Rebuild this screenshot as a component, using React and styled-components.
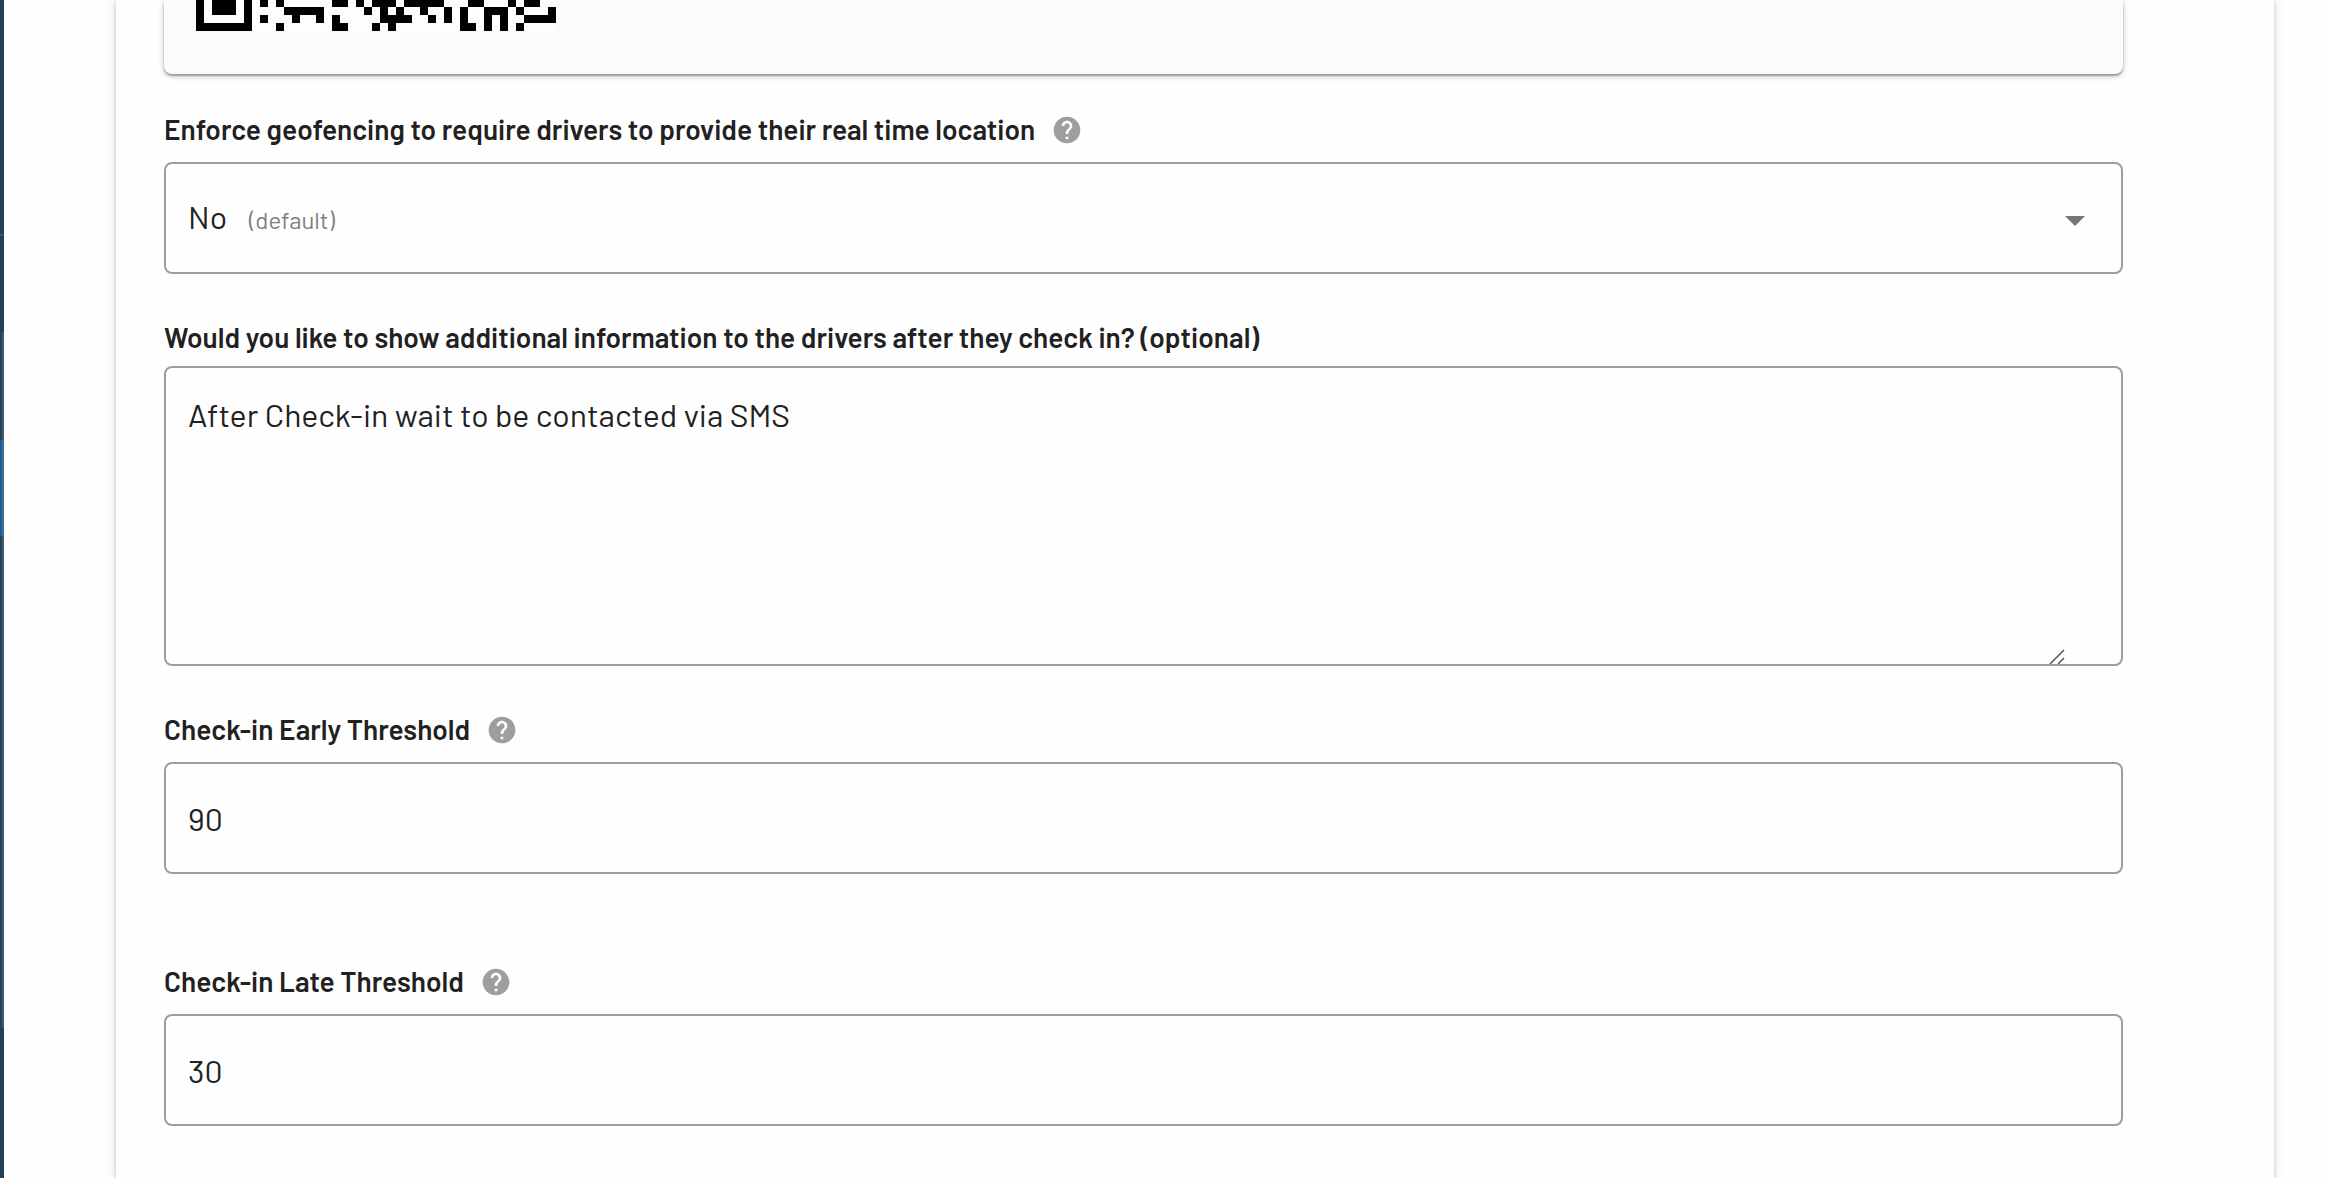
import React, { useState } from "react";
import styled, { createGlobalStyle } from "styled-components";

const GlobalStyle = createGlobalStyle`
  *, *::before, *::after { box-sizing: border-box; }
  body {
    margin: 0;
    background: #fefefe;
    color: #212121;
    font-family: Barlow, Roboto, "Liberation Sans", sans-serif;
  }
`;

const Shell = styled.div`
  display: flex;
  min-height: 100vh;
`;

const Rail = styled.nav`
  display: flex;
  flex: 0 0 4px;
  flex-direction: column;
  background: #1f405a;
`;

const RailDivider = styled.div`
  height: 2px;
  margin-top: 234px;
  background: #3b586e;
`;

const RailScroll = styled.div`
  height: 696px;
  margin-top: 96px;
  padding-top: 108px;
  background: linear-gradient(to right, #264358 2px, #405d72 2px);
`;

const RailActive = styled.div`
  height: 96px;
  background: linear-gradient(to right, #235a8c 2px, #3b6f9c 2px);
`;

const Page = styled.main`
  flex: 1;
  min-width: 0;
  padding: 0 54px 0 112px;
`;

const Card = styled.section`
  min-height: 100vh;
  padding: 0 151px 52px 48px;
  background: #fefefe;
  box-shadow: 0 2px 4px rgba(0, 0, 0, 0.2), 0 0 12px rgba(0, 0, 0, 0.1);
`;

const Form = styled.form`
  display: flex;
  flex-direction: column;
`;

const QrPanel = styled.div`
  height: 74px;
  padding: 0 32px;
  background: #fafbfd;
  border-radius: 0 0 8px 8px;
  box-shadow: 0 2px 2px rgba(0, 0, 0, 0.3), 0 2px 6px rgba(0, 0, 0, 0.2);
`;

const QrImage = styled.svg`
  display: block;
  width: 360px;
  height: 31px;
`;

const Field = styled.div`
  display: flex;
  flex-direction: column;
  margin-top: ${(p) => p.$gap}px;
`;

const LabelRow = styled.div`
  display: flex;
  align-items: center;
  gap: 16px;
  height: 40px;
  margin-bottom: ${(p) => p.$space || 12}px;
`;

const Label = styled.label`
  font-size: 28px;
  line-height: 36px;
  padding-bottom: 2px;
  font-weight: 600;
  white-space: nowrap;
`;

const HelpButton = styled.button`
  display: flex;
  padding: 0;
  border: 0;
  background: none;
  color: #9e9e9e;
  cursor: pointer;
`;

const Outline = styled.div`
  display: flex;
  align-items: center;
  height: ${(p) => p.$height || 112}px;
  padding-left: 22px;
  padding-right: ${(p) => p.$end || 22}px;
  border: 2px solid #9e9e9e;
  border-radius: 8px;
`;

const Select = styled.select`
  flex: 1;
  align-self: stretch;
  appearance: none;
  border: 0;
  background: none;
  outline: none;
  color: inherit;
  font: 400 32px/40px Barlow, Roboto, sans-serif;
  padding: 0;

  &, &::picker(select) { appearance: base-select; }
  &::picker-icon { display: none; }
`;

const SelectTrigger = styled.button`
  display: flex;
  align-items: center;
  height: 108px;
  padding: 0;
  border: 0;
  background: none;
  font: inherit;
  color: inherit;
`;

const OptionContent = styled.span`
  display: flex;
  align-items: baseline;
  gap: 22px;
`;

const Hint = styled.span`
  color: #808080;
  font-size: 24px;
`;

const TextInput = styled.input`
  flex: 1;
  min-width: 0;
  padding: 0;
  border: 0;
  outline: none;
  background: none;
  color: inherit;
  font: 400 32px/40px Barlow, Roboto, sans-serif;
`;

const TextArea = styled.textarea`
  flex: 1;
  min-width: 0;
  height: 100%;
  padding: 26px 0 0;
  border: 0;
  outline: none;
  background: none;
  color: inherit;
  resize: none;
  font: 400 32px/40px Barlow, Roboto, sans-serif;
`;

const ResizeGrip = styled.svg`
  align-self: flex-end;
  flex: none;
`;

const QR_ROWS = [
  [[0, 1], [2, 3], [6, 1], [8, 1], [10, 1], [17, 2], [20, 1], [22, 3], [26, 5], [34, 2], [39, 1], [41, 2]],
  [[0, 1], [2, 3], [6, 1], [11, 5], [21, 1], [23, 1], [25, 1], [28, 1], [31, 1], [33, 1], [36, 3], [40, 1], [44, 1]],
  [[0, 1], [6, 1], [8, 1], [12, 1], [15, 1], [17, 1], [23, 4], [29, 1], [31, 1], [33, 1], [36, 1], [38, 1], [41, 4]],
  [[0, 7], [10, 1], [17, 2], [22, 1], [24, 1], [33, 2], [36, 1], [38, 1], [40, 1]],
];

function QrCode() {
  return (
    <QrImage viewBox="0 1 360 31" shapeRendering="crispEdges" role="img" aria-label="QR code">
      <rect y="0" width="360" height="32" fill="#fefefe" />
      {QR_ROWS.map((runs, row) =>
        runs.map(([col, len]) => (
          <rect key={`${row}-${col}`} x={col * 8} y={row * 8} width={len * 8} height="8" fill="#000" />
        ))
      )}
    </QrImage>
  );
}

function Help() {
  return (
    <HelpButton type="button" aria-label="Help">
      <svg width="32" height="32" viewBox="0 0 24 24" fill="currentColor" aria-hidden="true">
        <path d="M12 2C6.48 2 2 6.48 2 12s4.48 10 10 10 10-4.48 10-10S17.52 2 12 2zm1 17h-2v-2h2v2zm2.07-7.75-.9.92C13.45 12.9 13 13.5 13 15h-2v-.5c0-1.1.45-2.1 1.17-2.83l1.24-1.26c.37-.36.59-.86.59-1.41 0-1.1-.9-2-2-2s-2 .9-2 2H8c0-2.21 1.79-4 4-4s4 1.79 4 4c0 .88-.36 1.68-.93 2.25z" />
      </svg>
    </HelpButton>
  );
}

export default function App() {
  const [info, setInfo] = useState("After Check-in wait to be contacted via SMS");
  const [early, setEarly] = useState("90");
  const [late, setLate] = useState("30");

  return (
    <>
      <GlobalStyle />
      <Shell>
        <Rail aria-label="Navigation">
          <RailDivider />
          <RailScroll>
            <RailActive />
          </RailScroll>
        </Rail>
        <Page>
          <Card>
            <Form>
              <QrPanel>
                <QrCode />
              </QrPanel>

              <Field $gap={36}>
                <LabelRow>
                  <Label htmlFor="geofencing">
                    Enforce geofencing to require drivers to provide their real time location
                  </Label>
                  <Help />
                </LabelRow>
                <Outline $end={36}>
                  <Select id="geofencing" defaultValue="no">
                    <SelectTrigger type="button">
                      <selectedcontent></selectedcontent>
                    </SelectTrigger>
                    <option value="no">
                      <OptionContent>
                        No <Hint>(default)</Hint>
                      </OptionContent>
                    </option>
                    <option value="yes">Yes</option>
                  </Select>
                  <svg width="20" height="16" viewBox="0 0 20 16" aria-hidden="true">
                    <path d="M0 6h20L10 16z" fill="#757575" />
                  </svg>
                </Outline>
              </Field>

              <Field $gap={44}>
                <LabelRow $space={8}>
                  <Label htmlFor="info">
                    Would you like to show additional information to the drivers after they check in? (optional)
                  </Label>
                </LabelRow>
                <Outline $height={300} $end={56}>
                  <TextArea id="info" value={info} onChange={(e) => setInfo(e.target.value)} />
                  <ResizeGrip width="16" height="15" viewBox="0 0 16 15" aria-hidden="true">
                    <path d="M1 15 15 1M9 15l6-6" fill="none" stroke="#555" strokeWidth="1.5" />
                  </ResizeGrip>
                </Outline>
              </Field>

              <Field $gap={44}>
                <LabelRow>
                  <Label htmlFor="early">Check-in Early Threshold</Label>
                  <Help />
                </LabelRow>
                <Outline>
                  <TextInput id="early" value={early} onChange={(e) => setEarly(e.target.value)} />
                </Outline>
              </Field>

              <Field $gap={88}>
                <LabelRow>
                  <Label htmlFor="late">Check-in Late Threshold</Label>
                  <Help />
                </LabelRow>
                <Outline>
                  <TextInput id="late" value={late} onChange={(e) => setLate(e.target.value)} />
                </Outline>
              </Field>
            </Form>
          </Card>
        </Page>
      </Shell>
    </>
  );
}
